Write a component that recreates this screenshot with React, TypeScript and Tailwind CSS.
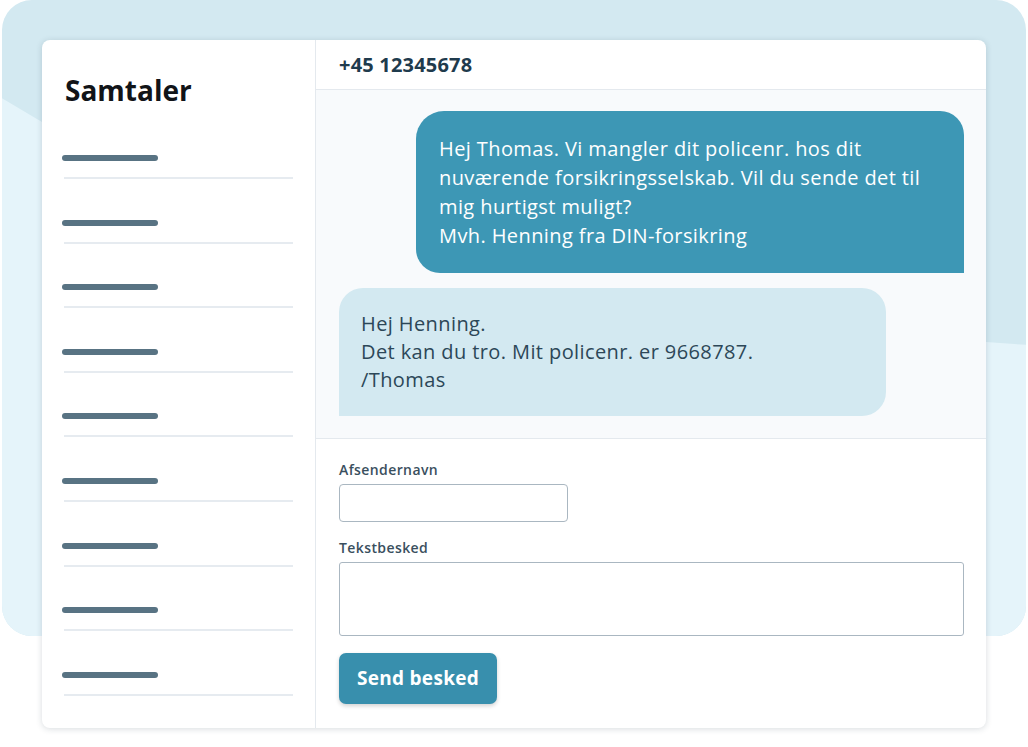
const conversations = Array.from({ length: 9 }, (_, i) => i);

function Backdrop() {
  return (
    <svg
      className="absolute left-[2px] top-0"
      width="1024"
      height="636"
      viewBox="0 0 1024 636"
    >
      <defs>
        <clipPath id="bg-clip">
          <rect x="0" y="0" width="1024" height="636" rx="30" ry="30" />
        </clipPath>
      </defs>
      <g clipPath="url(#bg-clip)">
        <rect x="0" y="0" width="1024" height="636" fill="#d3e9f1" />
        <path
          d="M-2 97 L40 122 L220 230 L984 342 L1026 345 L1026 640 L-2 640 Z"
          fill="#e5f4fa"
        />
      </g>
    </svg>
  );
}

function Sidebar() {
  return (
    <aside className="flex w-[274px] shrink-0 flex-col border-r border-[#e4e9ee] pl-[20px] pr-[21px]">
      <h1 className="pl-[3px] pt-[30px] text-[28px] font-bold leading-[40px] text-[#111418]">
        Samtaler
      </h1>
      <ul className="mt-[45px] flex flex-col">
        {conversations.map((i) => (
          <li key={i} className="flex h-[64.6px] flex-col">
            <div className="h-[6px] w-[96px] rounded-full bg-[#587383]" />
            <div className="ml-[2px] mt-[16px] h-[2px] w-[229px] bg-[#e6ebf0]" />
          </li>
        ))}
      </ul>
    </aside>
  );
}

function Chat() {
  return (
    <section className="flex min-w-0 flex-1 flex-col">
      <header className="flex h-[50px] items-center border-b border-[#e4e9ee] pl-[23px] pt-[1px]">
        <span className="text-[20px] font-bold tracking-[0.2px] text-[#1f3b4d]">+45 12345678</span>
      </header>

      <div className="flex flex-col gap-[15px] border-b border-[#e4e9ee] bg-[#f8fafc] pb-[22px] pl-[23px] pr-[22px] pt-[21px]">
        <div className="self-end w-[548px] rounded-tl-[28px] rounded-tr-[24px] rounded-bl-[24px] rounded-br-none bg-[#3d97b5] px-[23px] py-[23px] text-[20px] leading-[29px] tracking-[0.4px] text-white">
          Hej Thomas. Vi mangler dit policenr. hos dit
          <br />
          nuværende forsikringsselskab. Vil du sende det til
          <br />
          mig hurtigst muligt?
          <br />
          Mvh. Henning fra DIN-forsikring
        </div>
        <div className="w-[547px] rounded-tl-[24px] rounded-tr-[24px] rounded-br-[24px] rounded-bl-none bg-[#d3e9f1] px-[22px] py-[22px] text-[20px] leading-[28px] tracking-[0.4px] text-[#2c4758]">
          Hej Henning.
          <br />
          Det kan du tro. Mit policenr. er 9668787.
          <br />
          /Thomas
        </div>
      </div>

      <form className="flex flex-col pl-[23px] pt-[22px]">
        <label className="text-[14px] font-semibold leading-[18px] tracking-[0.4px] text-[#3a4f5e]">
          Afsendernavn
        </label>
        <input
          type="text"
          className="mt-[5px] h-[38px] w-[229px] rounded-[4px] border border-[#aab7c1] bg-white"
        />
        <label className="mt-[17px] text-[14px] font-semibold leading-[18px] tracking-[0.4px] text-[#3a4f5e]">
          Tekstbesked
        </label>
        <textarea className="mt-[5px] h-[74px] w-[625px] resize-none rounded-[3px] border border-[#aab7c1] bg-white" />
        <div className="pt-[17px]">
          <button
            type="button"
            className="h-[51px] w-[158px] rounded-[7px] bg-[#388fad] text-[19px] font-bold tracking-[0.3px] text-white shadow-[0_2px_4px_rgba(0,0,0,0.18)]"
          >
            Send besked
          </button>
        </div>
      </form>
    </section>
  );
}

export default function App() {
  return (
    <div
      className="relative h-[747px] w-[1028px] overflow-hidden bg-white"
      style={{ fontFamily: "'Open Sans', 'Noto Sans', sans-serif" }}
    >
      <Backdrop />
      <div className="relative ml-[42px] mt-[40px] flex h-[688px] w-[944px] overflow-hidden rounded-[8px] bg-white shadow-[0_1px_6px_rgba(40,60,80,0.18)]">
        <Sidebar />
        <Chat />
      </div>
    </div>
  );
}
